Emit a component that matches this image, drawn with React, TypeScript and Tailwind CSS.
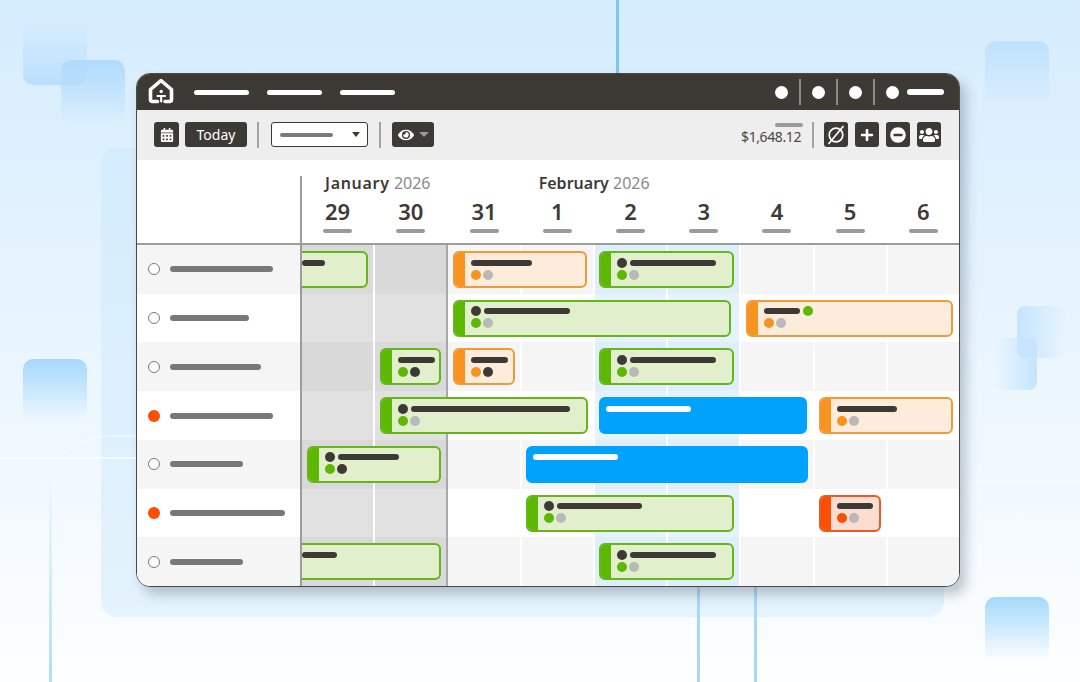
import React from 'react';
import { FaCalendarAlt, FaEye, FaMinusCircle, FaPlus, FaUsers } from 'react-icons/fa';

type Tone = 'green' | 'orange' | 'red' | 'blue';

interface Bar {
  x: number;
  w: number;
  tone: Tone;
  line: number;
  topDot?: boolean;
  dots?: [string, string];
  cut?: boolean;
  afterDot?: boolean;
}

const dark = 'bg-[#3d3a35]';
const greenDot = '#5cb800';
const orangeDot = '#f8931f';
const redDot = '#fd4e02';
const grayDot = '#b9b9b9';
const darkDot = '#3d3a35';

const tones: Record<Tone, { box: string; stripe: string }> = {
  green: { box: 'border-[#66b51a] bg-[#e1efcd]', stripe: 'bg-[#5cb800]' },
  orange: { box: 'border-[#f19a3a] bg-[#fdebdc]', stripe: 'bg-[#f8931f]' },
  red: { box: 'border-[#ea5a28] bg-[#fddcd2]', stripe: 'bg-[#fd4e02]' },
  blue: { box: 'border-[#00a2fb] bg-[#00a2fb]', stripe: '' },
};

// x positions are page pixels, the chart starts at 302
const rows: { label: number; busy?: boolean; bars: Bar[] }[] = [
  {
    label: 103,
    bars: [
      { x: 302, w: 66, tone: 'green', line: 23, cut: true },
      { x: 453, w: 134, tone: 'orange', line: 61, dots: [orangeDot, grayDot] },
      { x: 599, w: 135, tone: 'green', line: 86, topDot: true, dots: [greenDot, grayDot] },
    ],
  },
  {
    label: 79,
    bars: [
      { x: 453, w: 278, tone: 'green', line: 86, topDot: true, dots: [greenDot, grayDot] },
      { x: 746, w: 207, tone: 'orange', line: 36, afterDot: true, dots: [orangeDot, grayDot] },
    ],
  },
  {
    label: 91,
    bars: [
      { x: 380, w: 61, tone: 'green', line: 37, dots: [greenDot, darkDot] },
      { x: 453, w: 62, tone: 'orange', line: 37, dots: [orangeDot, darkDot] },
      { x: 599, w: 135, tone: 'green', line: 86, topDot: true, dots: [greenDot, grayDot] },
    ],
  },
  {
    label: 103,
    busy: true,
    bars: [
      { x: 380, w: 208, tone: 'green', line: 159, topDot: true, dots: [greenDot, grayDot] },
      { x: 599, w: 208, tone: 'blue', line: 85 },
      { x: 819, w: 134, tone: 'orange', line: 60, dots: [orangeDot, grayDot] },
    ],
  },
  {
    label: 73,
    bars: [
      { x: 307, w: 134, tone: 'green', line: 61, topDot: true, dots: [greenDot, darkDot] },
      { x: 526, w: 282, tone: 'blue', line: 85 },
    ],
  },
  {
    label: 115,
    busy: true,
    bars: [
      { x: 526, w: 208, tone: 'green', line: 85, topDot: true, dots: [greenDot, grayDot] },
      { x: 819, w: 62, tone: 'red', line: 36, dots: [redDot, grayDot] },
    ],
  },
  {
    label: 73,
    bars: [
      { x: 302, w: 139, tone: 'green', line: 35, cut: true },
      { x: 599, w: 135, tone: 'green', line: 86, topDot: true, dots: [greenDot, grayDot] },
    ],
  },
];

const days = ['29', '30', '31', '1', '2', '3', '4', '5', '6'];

const Dot = ({ color }: { color: string }) => (
  <span className="block h-[10px] w-[10px] shrink-0 rounded-full" style={{ backgroundColor: color }} />
);

const ToolBtn = ({ children, className = 'w-[24px]' }: { children: React.ReactNode; className?: string }) => (
  <div className={`flex h-[25px] items-center justify-center rounded-[3px] text-white ${dark} ${className}`}>{children}</div>
);

const Sep = () => <div className="h-[26px] w-[2px] bg-[#a3a3a3]" />;

const Logo = () => (
  <svg className="-mt-[3px]" width="26" height="26" viewBox="0 0 26 26" fill="none" stroke="white" strokeLinecap="round" strokeLinejoin="round">
    <path d="M9.5 23.5H4.5a2 2 0 0 1-2-2V11.5L13 2.5l10.5 9v10a2 2 0 0 1-2 2H17" strokeWidth="3.6" />
    <circle cx="13.2" cy="13.5" r="1.7" fill="white" stroke="none" />
    <path d="M9.5 18H17M13.2 18V23.5" strokeWidth="2.2" />
  </svg>
);

const GanttBar = ({ bar }: { bar: Bar }) => {
  const tone = tones[bar.tone];
  const isBlue = bar.tone === 'blue';
  return (
    <div
      className={`absolute top-[6px] flex h-[37px] overflow-hidden border-2 ${tone.box} ${bar.cut ? 'rounded-r-[6px] border-l-0' : 'rounded-[6px]'}`}
      style={{ left: bar.x - 302, width: bar.w }}
    >
      {!bar.cut && !isBlue && <div className={`w-[10px] shrink-0 ${tone.stripe}`} />}
      <div className={`flex flex-col gap-[2px] pt-[4.5px] ${bar.cut ? '' : isBlue ? 'pl-[5px]' : 'pl-[6px]'}`}>
        <div className="flex h-[10px] items-center gap-[3px]">
          {bar.topDot && <Dot color={darkDot} />}
          <div className={`h-[6px] rounded-full ${isBlue ? 'bg-white' : dark}`} style={{ width: bar.line }} />
          {bar.afterDot && <Dot color={greenDot} />}
        </div>
        {bar.dots && (
          <div className="flex gap-[2px]">
            <Dot color={bar.dots[0]} />
            <Dot color={bar.dots[1]} />
          </div>
        )}
      </div>
    </div>
  );
};

const Backdrop = () => (
  <>
    <div className="absolute left-[101px] top-[148px] h-[469px] w-[843px] rounded-[16px] bg-gradient-to-b from-[#d4ecfd] to-[#e4f3fd]" />
    <div className="absolute left-[23px] top-[22px] h-[63px] w-[64px] rounded-[10px] bg-gradient-to-b from-transparent to-[#b9dffe]" />
    <div className="absolute left-[61px] top-[60px] h-[65px] w-[64px] rounded-[10px] bg-gradient-to-b from-[#b0dbfd] to-transparent" />
    <div className="absolute left-[985px] top-[41px] h-[65px] w-[64px] rounded-[10px] bg-gradient-to-b from-[#bfe2fd] to-transparent" />
    <div className="absolute left-[1017px] top-[306px] h-[52px] w-[50px] rounded-[8px] bg-gradient-to-r from-[#c5e4fd] to-transparent" />
    <div className="absolute left-[995px] top-[338px] h-[52px] w-[42px] rounded-[8px] bg-gradient-to-l from-[#c5e4fd] to-transparent" />
    <div className="absolute left-[23px] top-[359px] h-[62px] w-[64px] rounded-[10px] bg-gradient-to-b from-[#a6d9fd] to-transparent" />
    <div className="absolute left-[985px] top-[597px] h-[64px] w-[64px] rounded-[10px] bg-gradient-to-b from-[#a6d9fd] to-transparent" />
    <div className="absolute left-[616px] top-0 h-[73px] w-[3px] bg-[#7cc4f5]" />
    <div className="absolute left-[49px] top-[472px] h-[210px] w-[3px] bg-gradient-to-b from-transparent to-[#b3dcf9]" />
    <div className="absolute left-[697px] top-[586px] h-[96px] w-[3px] bg-[#a9d7f5]" />
    <div className="absolute left-[754px] top-[586px] h-[96px] w-[3px] bg-[#a9d7f5]" />
    <div className="absolute left-0 top-[457px] h-[2px] w-[136px] bg-white/70" />
    <div className="absolute left-[960px] top-[481px] h-[1px] w-[120px] bg-white/70" />
    <svg className="absolute left-[60px] top-[434px]" width="76" height="24" fill="none">
      <path d="M0 22C14 10 30 2 50 2H76" stroke="white" strokeOpacity="0.5" strokeWidth="1.5" />
    </svg>
  </>
);

export default function App() {
  return (
    <div
      className="relative h-[682px] w-[1080px] overflow-hidden bg-gradient-to-b from-[#d5ecfd] to-[#fdfeff] pl-[136px] pt-[73px]"
      style={{ fontFamily: '"Noto Sans", sans-serif' }}
    >
      <Backdrop />

      <div className="relative flex h-[514px] w-[824px] flex-col overflow-hidden rounded-[14px] border border-[#4a4843] bg-white shadow-[6px_8px_12px_rgba(60,80,100,0.3)]">
        {/* top nav */}
        <div className={`flex h-[36px] shrink-0 items-center pl-[11px] pr-[15px] ${dark}`}>
          <Logo />
          <div className="ml-[20px] flex gap-[18px]">
            <div className="h-[5px] w-[55px] rounded-full bg-white" />
            <div className="h-[5px] w-[55px] rounded-full bg-white" />
            <div className="h-[5px] w-[55px] rounded-full bg-white" />
          </div>
          <div className="ml-auto flex items-center">
            <div className="h-[13px] w-[13px] rounded-full bg-white" />
            <div className="mx-[11px] h-[26px] w-[2px] bg-[#8d8b87]" />
            <div className="h-[13px] w-[13px] rounded-full bg-white" />
            <div className="mx-[11px] h-[26px] w-[2px] bg-[#8d8b87]" />
            <div className="h-[13px] w-[13px] rounded-full bg-white" />
            <div className="mx-[11px] h-[26px] w-[2px] bg-[#8d8b87]" />
            <div className="h-[13px] w-[13px] rounded-full bg-white" />
            <div className="ml-[8px] h-[6px] w-[37px] rounded-full bg-white" />
          </div>
        </div>

        {/* toolbar */}
        <div className="flex h-[50px] shrink-0 items-center bg-[#eeeeee] pb-[1px] pl-[17px] pr-[18px]">
          <ToolBtn className="w-[25px]">
            <FaCalendarAlt size={14} />
          </ToolBtn>
          <ToolBtn className="ml-[6px] w-[62px]">
            <span className="text-[14px]">Today</span>
          </ToolBtn>
          <div className="ml-[10px] mr-[12px]">
            <Sep />
          </div>
          <div className="flex h-[25px] w-[97px] items-center justify-between rounded-[3px] border border-[#3d3a35] bg-white pl-[8px] pr-[7px]">
            <div className="h-[4px] w-[53px] rounded-full bg-[#7a7a7a]" />
            <div className="h-0 w-0 border-x-[4.5px] border-t-[5px] border-x-transparent border-t-[#3d3a35]" />
          </div>
          <div className="mx-[11px]">
            <Sep />
          </div>
          <ToolBtn className="w-[42px] gap-[5px]">
            <FaEye size={16} />
            <div className="h-0 w-0 border-x-[5px] border-t-[5px] border-x-transparent border-t-[#9a9a9a]" />
          </ToolBtn>
          <div className="ml-auto flex flex-col items-end">
            <div className="-mr-[2px] h-[4px] w-[28px] rounded-full bg-[#9a9a9a]" />
            <span className="mt-[1px] text-[14px] leading-[18px] tracking-[-0.4px] text-[#4a4843]">$1,648.12</span>
          </div>
          <div className="ml-[11px] mr-[10px]">
            <Sep />
          </div>
          <div className="flex gap-[7px]">
            <ToolBtn>
              <svg width="22" height="22" viewBox="0 0 22 22" fill="none" stroke="white" strokeWidth="1.7">
                <circle cx="11" cy="11" r="6.8" />
                <path d="M3.5 20L18.5 2" />
              </svg>
            </ToolBtn>
            <ToolBtn>
              <FaPlus size={14} />
            </ToolBtn>
            <ToolBtn>
              <FaMinusCircle size={16} />
            </ToolBtn>
            <ToolBtn>
              <FaUsers size={20} />
            </ToolBtn>
          </div>
        </div>

        {/* dates */}
        <div className="flex h-[85px] shrink-0 border-b-2 border-[#9c9c9c]">
          <div className="w-[163px] shrink-0" />
          <div className="mt-[16px] flex-1 border-l-2 border-[#9c9c9c]">
            <div className="grid grid-cols-9 gap-x-[2px]">
              <div className="col-span-3 whitespace-nowrap pl-[23px] text-[16px] font-semibold leading-[14px] text-[#3d3a35]">
                <span className="tracking-[0.7px]">January</span> <span className="font-normal text-[#8a8a8a]">2026</span>
              </div>
              <div className="col-span-6 whitespace-nowrap pl-[17px] text-[16px] font-semibold leading-[14px] text-[#3d3a35]">
                February <span className="font-normal text-[#8a8a8a]">2026</span>
              </div>
              {days.map((day) => (
                <div key={day} className="mt-[6px] flex flex-col items-center">
                  <span className="text-[22px] font-semibold leading-[30px] text-[#3d3a35]">{day}</span>
                  <div className="mt-[3px] h-[4px] w-[29px] rounded-full bg-[#9a9a9a]" />
                </div>
              ))}
            </div>
          </div>
        </div>

        {/* rows */}
        <div className="flex min-h-0 flex-1 flex-col">
          {rows.map((row, r) => {
            const odd = r % 2 === 0;
            return (
              <div key={r} className="flex flex-1">
                <div className={`flex w-[163px] shrink-0 items-center pl-[11px] ${odd ? 'bg-[#f5f5f5]' : 'bg-white'}`}>
                  <div className={`h-[12px] w-[12px] rounded-full ${row.busy ? 'bg-[#fd4e02]' : 'border-[1.5px] border-[#7a7a7a] bg-white'}`} />
                  <div className="ml-[10px] h-[6px] rounded-full bg-[#7a7777]" style={{ width: row.label }} />
                </div>
                <div className="relative flex-1 overflow-hidden border-l-2 border-[#9c9c9c]">
                  <div className="grid h-full grid-cols-9 gap-x-[2px]">
                    {days.map((day, c) => {
                      let cell = odd ? 'bg-[#f5f5f5]' : 'bg-white';
                      if (c < 2) cell = odd ? 'bg-[#d9d9d9]' : 'bg-[#e1e1e1]';
                      if (c === 4 || c === 5) cell = odd ? 'bg-[#dfeefb]' : 'bg-[#e6f2fc]';
                      if (c === 1) cell += ' -mr-[2px] border-r-2 border-[#a8a8a8]';
                      return <div key={day} className={cell} />;
                    })}
                  </div>
                  {row.bars.map((bar) => (
                    <GanttBar key={bar.x} bar={bar} />
                  ))}
                </div>
              </div>
            );
          })}
        </div>
      </div>
    </div>
  );
}
